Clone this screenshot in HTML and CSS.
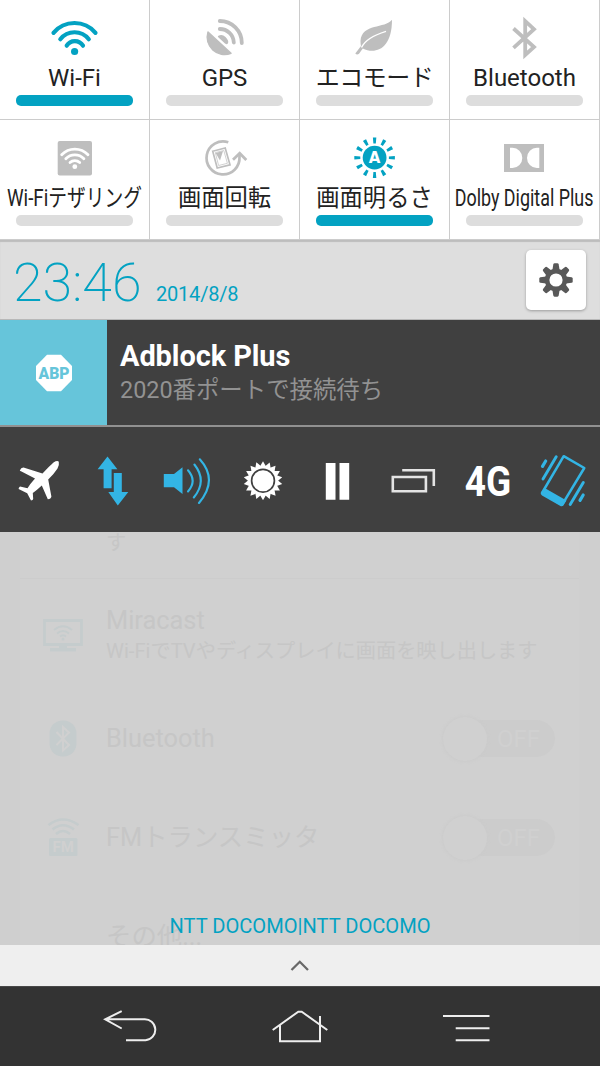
FILE: index.html
```html
<!DOCTYPE html>
<html lang="ja">
<head>
  <meta charset="UTF-8" />
  <meta name="viewport" content="width=device-width, initial-scale=1.0"/>
  <title>Quick Settings</title>
  <link rel="stylesheet" href="styles.css">
</head>
<body>
  <div class="tiles">
    <div class="tile on">
      <svg class="icon line" viewBox="0 0 60 60">
        <g stroke-width="4.2" stroke-linecap="round">
          <path d="M8.5 32.8A27.4 27.4 0 0 1 50.5 32.8"/>
          <path d="M15.3 39.2A18.1 18.1 0 0 1 43.8 39.2"/>
          <path d="M21.7 45.7A9.5 9.5 0 0 1 38 45.7"/>
        </g>
        <circle class="solid" cx="29.6" cy="51.5" r="3.6"/>
      </svg>
      <span class="label">Wi-Fi</span>
      <div class="bar"></div>
    </div>
    <div class="tile">
      <svg class="icon line" viewBox="0 0 60 60">
        <path class="solid" stroke-linejoin="round" stroke-width="1.5" d="M13 32L36 53.3A17.4 17.4 0 0 1 13 32z"/>
        <g stroke-width="3.8" stroke-linecap="round">
          <path d="M24.8 21A22 22 0 0 1 46.8 43"/>
          <path d="M24.8 29A14 14 0 0 1 38.8 42.5"/>
        </g>
        <path class="solid" stroke="none" d="M23 36Q27 33.5 30.5 37Q34.5 41 32.8 43.5Q32 45 30 43.5L23.5 37.5Q22.5 36.8 23 36z"/>
      </svg>
      <span class="label">GPS</span>
      <div class="bar"></div>
    </div>
    <div class="tile">
      <svg class="icon" viewBox="0 0 60 60">
        <path d="M47 19.8C40 29 17 23 15.5 41Q15.5 44 16 46L10.3 53.5Q12 55.2 14 53.8L17.8 48.5C30 54.5 47 50 47 19.8z"/>
        <path class="cut" d="M16.5 47.5Q21 37.5 41 31.3" fill="none" stroke-width="1.4"/>
      </svg>
      <span class="label kana">エコモード</span>
      <div class="bar"></div>
    </div>
    <div class="tile">
      <svg class="icon line" viewBox="0 0 60 60">
        <path stroke-width="3.8" d="M18.5 28.500L39 47L30.200 55V21L39 29.200L18.500 47.800"/>
      </svg>
      <span class="label">Bluetooth</span>
      <div class="bar"></div>
    </div>
    <div class="tile">
      <svg class="icon" viewBox="0 0 60 60">
        <rect x="12.7" y="21" width="34.3" height="34.5" rx="2"/>
        <g class="cut" fill="none" stroke-width="2.8" stroke-linecap="round">
          <path d="M16.7 34.8A18 18 0 0 1 43 34.8"/>
          <path d="M20.8 38.8A12.5 12.5 0 0 1 38.9 38.8"/>
          <path d="M25 42.6A7 7 0 0 1 34.7 42.6"/>
        </g>
        <circle cx="29.8" cy="46.7" r="2.4" fill="#fff"/>
      </svg>
      <span class="label tether">Wi-Fiテザリング</span>
      <div class="bar"></div>
    </div>
    <div class="tile">
      <svg class="icon line" viewBox="0 0 60 60">
        <path stroke-width="2.7" d="M33.3 22.3A16.5 16.5 0 1 0 44.5 37V33.5"/>
        <path stroke-width="2.8" d="M38 39.7L44.7 33.2L51.3 40"/>
        <path stroke-width="1.7" d="M17.7 31.2L30.2 28L35 44.8L22.2 48z"/>
        <path stroke-width="0.7" d="M20.3 32.6L28.8 30.5L32.4 43.3L23.6 45.5z"/>
        <path class="solid" stroke="none" d="M20.6 33L28 31L25 40.5z"/>
      </svg>
      <span class="label kanji">画面回転</span>
      <div class="bar"></div>
    </div>
    <div class="tile on">
      <svg class="icon" viewBox="0 0 60 60">
        <circle cx="29.6" cy="37.7" r="11.9"/>
        <circle class="rays" cx="29.6" cy="37.7" r="17.3" pathLength="120"/>
        <text class="auto" x="29.6" y="43.2">A</text>
      </svg>
      <span class="label kanji">画面明るさ</span>
      <div class="bar"></div>
    </div>
    <div class="tile">
      <svg class="icon" viewBox="0 0 60 60">
        <rect x="9" y="24" width="40" height="28"/>
        <path fill="#fff" d="M15 27.7h2.5a9.8 10.2 0 0 1 0 20.4H15zM44.3 27.7h-2.5a9.8 10.2 0 0 0 0 20.4h2.5z"/>
      </svg>
      <span class="label dolby">Dolby Digital Plus</span>
      <div class="bar"></div>
    </div>
  </div>

  <header>
    <span class="clock">23:46</span>
    <span class="date">2014/8/8</span>
    <button class="settings">
      <svg viewBox="-20 -20 40 40" width="40" height="40">
        <g id="teeth">
          <path id="tooth" d="M-3.6 -10L-2.7 -15.6Q-2.5 -16.7 -1.4 -16.7H1.4Q2.5 -16.7 2.7 -15.6L3.6 -10z"/>
          <use href="#tooth" transform="rotate(45)"/>
          <use href="#tooth" transform="rotate(90)"/>
          <use href="#tooth" transform="rotate(135)"/>
        </g>
        <use href="#teeth" transform="rotate(180)"/>
        <circle r="8.9" fill="none" stroke="#585858" stroke-width="4.6"/>
      </svg>
    </button>
  </header>

  <div class="notification">
    <div class="app-icon">
      <svg viewBox="0 0 38 38" width="38" height="38">
        <path fill="#fff" d="M12 .8H26L37 12V26L26 37.2H12L1 26V12z"/>
        <text class="abp" x="19" y="24.7" textLength="31" lengthAdjust="spacingAndGlyphs">ABP</text>
      </svg>
    </div>
    <div class="message">
      <div class="title">Adblock Plus</div>
      <div class="text">2020番ポートで接続待ち</div>
    </div>
  </div>

  <div class="tools">
    <svg viewBox="0 0 60 60">
      <path d="M50.8 11.8Q49.5 10 45.5 12.5Q42.5 15 34.5 23.5L15.5 17.6Q13 17.5 11.8 20.5Q12 21.2 13.5 21.6L27 28.5Q22 34 19.5 38.3L12 36.5Q10.5 37.5 10.6 39L19.2 43.3L23 50.5Q25 50.3 25.2 49L24.8 43Q29 40 33.8 35.5L39.8 49.3Q43 49 43.4 46.5L40.2 29.5Q46 24 49.5 18.5Q51.5 14.5 50.8 11.8z"/>
    </svg>
    <svg class="blue" viewBox="0 0 60 60">
      <path d="M24.5 6.5L34.4 19.2H28.6V38.3H20.6V19.2H14.6zM30.8 23H38.8V42H45.3L34.8 55.5L25.3 42H30.8z"/>
    </svg>
    <svg class="blue" viewBox="0 0 60 60">
      <path d="M5.8 24H16L24.5 17.3V44L16 37.3H5.8z"/>
      <g fill="none" stroke="currentColor" stroke-width="2.1" stroke-linecap="round">
        <path d="M30 20.3Q39.3 31 30 41.5"/>
        <path d="M36.4 14.5Q49.5 31 35.8 47.5"/>
        <path d="M41.8 9.3Q60.5 30 41 53"/>
      </g>
    </svg>
    <svg viewBox="-30 -30.7 60 60">
      <path id="ray" d="M0 -19.5L16.9 9.75H-16.9z"/>
      <use href="#ray" transform="rotate(20)"/>
      <use href="#ray" transform="rotate(40)"/>
      <use href="#ray" transform="rotate(60)"/>
      <use href="#ray" transform="rotate(80)"/>
      <use href="#ray" transform="rotate(100)"/>
      <circle r="11.4" stroke="#404040" stroke-width="1.7"/>
    </svg>
    <svg viewBox="0 0 60 60">
      <path d="M17.8 13H27.5V49.7H17.8zM31.5 13H41.2V49.7H31.5z"/>
    </svg>
    <svg viewBox="0 0 60 60">
      <path fill="none" stroke="#e4e4e4" stroke-width="2.6" d="M9.8 27H42.9V41.3H9.8zM19.2 20.2H50.8V36"/>
    </svg>
    <span class="network">4G</span>
    <svg class="blue" viewBox="0 0 60 60">
      <path fill="none" stroke="currentColor" stroke-width="2.5" stroke-linejoin="round" d="M30.7 6.2L51.3 18L29 54.8L9 43z"/>
      <path d="M12.5 38.5L33.5 50.5L30.3 55.5Q29 57 27 55.8L9 45.5Q7.2 44 8 42.3z"/>
      <g fill="none" stroke="currentColor" stroke-linecap="round">
        <path stroke-width="2.9" d="M23.2 6.8L10 29M50.3 32.5L37.2 54.6"/>
        <path stroke-width="3.2" d="M12.7 11L9.5 16.3M50.2 45L47 50.3"/>
      </g>
    </svg>
  </div>

  <!-- settings screen showing through the shade -->
  <main>
    <div class="sheet">
      <div class="row partial"><span class="sub">す</span></div>
      <div class="row tall">
        <svg class="row-icon" viewBox="0 0 44 44">
          <path fill="none" stroke="currentColor" stroke-width="2.8" d="M3.5 7.500H40.500V31.500H3.500z"/>
          <path d="M18 32h8v3h9v3.500H9V35h9z"/>
          <path fill="none" stroke="currentColor" stroke-width="2" d="M13 17Q22 9.500 31 17M16 20.500Q22 15.500 28 20.500M19 23.500Q22 21 25 23.500"/>
          <circle cx="22" cy="26" r="1.5"/>
        </svg>
        <div>
          <div class="name">Miracast</div>
          <div class="sub">Wi-FiでTVやディスプレイに画面を映し出します</div>
        </div>
      </div>
      <div class="row">
        <svg class="row-icon" viewBox="0 0 44 44">
          <rect x="8.500" y="3.500" width="27" height="36" rx="13"/>
          <path fill="none" stroke="#d0d0d0" stroke-width="2" d="M15.500 15L28 28L22 33.500V10L28 15.500L15.500 28"/>
        </svg>
        <span class="name">Bluetooth</span>
        <div class="switch"><span class="knob"></span>OFF</div>
      </div>
      <div class="row">
        <svg class="row-icon" viewBox="0 0 44 44">
          <rect x="8" y="22" width="28.500" height="18" rx="1.500"/>
          <path fill="none" stroke="currentColor" stroke-width="2.5" d="M7.500 9Q22 -2 37.500 9M11.500 13.500Q22 5 33 13.500M15 18Q22 12 29 18"/>
          <text class="fm" x="22.200" y="36">FM</text>
        </svg>
        <span class="name">FMトランスミッタ</span>
        <div class="switch"><span class="knob"></span>OFF</div>
      </div>
      <div class="row">
        <span class="row-icon"></span>
        <span class="name">その他...</span>
      </div>
    </div>
    <div class="carrier">NTT DOCOMO|NTT DOCOMO</div>
  </main>

  <div class="handle">
    <svg viewBox="0 0 20 12" width="20" height="12"><path d="M1.500 10L9.800 1.800L18 10"/></svg>
  </div>

  <nav>
    <svg viewBox="0 0 60 60"><path d="M19.700 14.200L3.200 22.300L19.700 31.500M3.500 22.300H42A10.500 10.500 0 0 1 43.500 43.300H24"/></svg>
    <svg viewBox="0 0 60 60"><path d="M2.700 33L28.300 14.700H31.700L57.300 33M10 28V44.300H50V19"/></svg>
    <svg viewBox="0 0 60 60"><path d="M5 19H51.500M17.700 31.300H51.500M17.700 43.300H51.500"/></svg>
  </nav>
</body>
</html>
```

FILE: styles.css
```css
:root {
  --accent: #03a2c2;
  --blue: #33b5e5;
  --off: #bebebe;
  --dark: #404040;
  --shade: #d0d0d0;
}

* {
  box-sizing: border-box;
  margin: 0;
  padding: 0;
}

body {
  width: 600px;
  height: 1066px;
  display: flex;
  flex-direction: column;
  overflow: hidden;
  font-family: Roboto, "Noto Sans CJK JP", sans-serif;
  background-color: var(--shade);
}

svg {
  display: block;
  flex: none;
}

/* Quick setting tiles */
.tiles {
  display: grid;
  grid-template-columns: repeat(4, 150px);
  grid-auto-rows: 120px;
  background-color: #fff;
}

.tile {
  display: flex;
  flex-direction: column;
  align-items: center;
  color: var(--off);
  border-right: 1px solid #ccc;
  border-bottom: 1px solid #ccc;
}

.tile.on {
  color: var(--accent);
}

.icon {
  width: 60px;
  height: 60px;
  fill: currentColor;
}

.icon.line {
  fill: none;
  stroke: currentColor;
}

.icon .solid {
  fill: currentColor;
}

.icon circle.solid {
  stroke: none;
}

.icon .cut {
  stroke: #fff;
}

.rays {
  fill: none;
  stroke: currentColor;
  stroke-width: 6;
  stroke-dasharray: 3.4 6.6;
  stroke-dashoffset: 1.7;
}

.auto {
  fill: #fff;
  font: bold 15px "DejaVu Sans", sans-serif;
  text-anchor: middle;
}

.label {
  height: 35px;
  line-height: 36px;
  font-size: 24px;
  color: #222;
  white-space: nowrap;
}

.kana {
  letter-spacing: -0.5px;
}

.kanji {
  font-size: 23.3px;
}

.tether {
  transform: scaleX(0.78);
}

.dolby {
  transform: scaleX(0.745);
}

.bar {
  width: 117px;
  height: 11px;
  border-radius: 5px;
  background-color: #ddd;
}

.on .bar {
  background-color: var(--accent);
}

/* Clock row */
header {
  height: 80px;
  display: flex;
  align-items: baseline;
  padding: 10px 14px 0 13px;
  background-color: #dedede;
  border-bottom: 1px solid #b8b8b8;
  box-shadow: inset 0 2px 1px #bdbdbd;
  color: var(--accent);
}

.clock {
  width: 143px;
  font-size: 54px;
  font-weight: 200;
  line-height: 66px;
  transform: scaleX(0.995);
  transform-origin: left;
}

.date {
  font-size: 20px;
  letter-spacing: -0.2px;
}

.settings {
  display: flex;
  align-self: flex-start;
  align-items: center;
  justify-content: center;
  width: 60px;
  height: 60px;
  margin-left: auto;
  border: none;
  border-radius: 5px;
  background-color: #fff;
  box-shadow: 0 1px 3px rgba(0,0,0,0.3);
  fill: #585858;
}

/* Notification */
.notification {
  height: 107px;
  display: flex;
  background-color: var(--dark);
  border-bottom: 2px solid #919191;
}

.app-icon {
  width: 107px;
  display: flex;
  align-items: center;
  justify-content: center;
  background-color: #66c5da;
}

.abp {
  fill: #66c5da;
  font: 900 16px Roboto, sans-serif;
  text-anchor: middle;
}

.message {
  padding: 18px 13px;
}

.title {
  font-size: 29px;
  font-weight: bold;
  line-height: 36px;
  letter-spacing: -0.1px;
  color: #fff;
}

.text {
  font-size: 23.4px;
  line-height: 33px;
  color: #929292;
}

/* Toggle strip */
.tools {
  height: 105px;
  display: flex;
  align-items: center;
  justify-content: space-around;
  background-color: var(--dark);
  fill: #fff;
}

.tools svg,
.network {
  width: 60px;
  height: 60px;
}

.blue {
  color: var(--blue);
  fill: currentColor;
}

.network {
  font-size: 43px;
  font-weight: bold;
  line-height: 62px;
  text-align: center;
  color: #fff;
  transform: scaleX(0.86);
}

/* Dimmed screen */
main {
  position: relative;
  height: 413px;
  padding: 0 21px 0 20px;
  overflow: hidden;
  background-color: #cfcfcf;
}

.sheet {
  background-color: var(--shade);
  color: #c6c6c6;
}

.row {
  height: 99px;
  display: flex;
  align-items: center;
  padding: 2px 24px 0 21px;
}

.row.tall {
  height: 109px;
}

.row.partial {
  height: 47px;
  align-items: flex-start;
  padding-top: 0;
  padding-left: 86px;
  border-bottom: 1px solid #ccc;
}

.partial .sub {
  margin-top: -3px;
}

.row-icon {
  width: 44px;
  height: 44px;
  margin-right: 21px;
  color: #c5cccd;
  fill: currentColor;
}

.fm {
  fill: var(--shade);
  font-size: 15px;
  font-weight: bold;
  text-anchor: middle;
}

.name {
  font-size: 25.4px;
  line-height: 33px;
}

.sub {
  font-size: 20.2px;
  line-height: 28px;
  white-space: nowrap;
}

.switch {
  width: 112px;
  height: 37px;
  display: flex;
  align-items: center;
  gap: 10px;
  margin-left: auto;
  border-radius: 19px;
  font-size: 24px;
  color: #d0d0d0;
  background-color: #ccc;
}

.knob {
  width: 44px;
  height: 44px;
  flex: none;
  border-radius: 50%;
  background-color: #d0d0d0;
  box-shadow: 0 0 3px 1px #cbcbcb;
}

.carrier {
  position: absolute;
  left: 0;
  right: 0;
  bottom: 7px;
  font-size: 20.1px;
  line-height: 24px;
  text-align: center;
  color: var(--accent);
}

.handle {
  height: 41px;
  display: flex;
  align-items: center;
  justify-content: center;
  background-color: #efefef;
  fill: none;
  stroke: #686868;
  stroke-width: 2.3;
}

/* Navigation bar */
nav {
  height: 80px;
  display: flex;
  align-items: center;
  justify-content: center;
  gap: 108px;
  background-color: #333;
  border-top: 1px solid #484848;
  fill: none;
  stroke: #eee;
  stroke-width: 2;
}

nav svg {
  width: 60px;
  height: 60px;
}
```
